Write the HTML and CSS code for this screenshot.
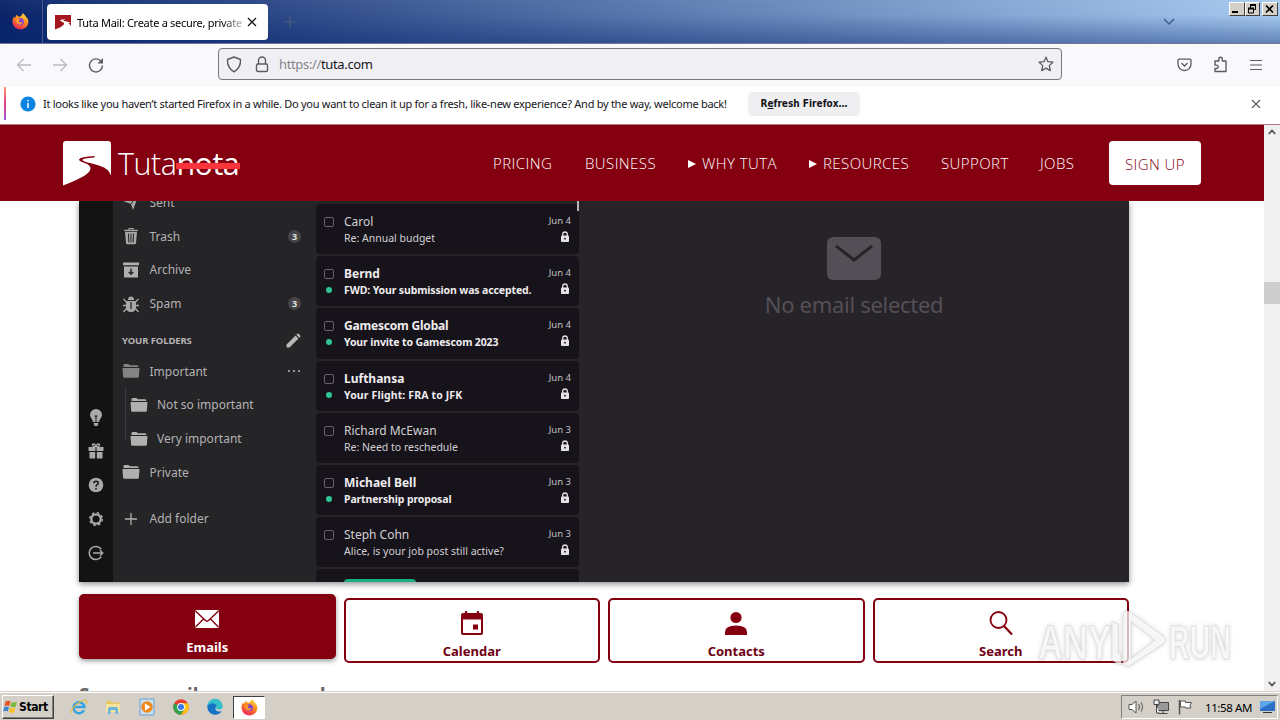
FILE: index.html
```html
<!DOCTYPE html>
<html lang="en">
<head>
<meta charset="utf-8">
<title>Tuta Mail</title>
<link rel="stylesheet" href="styles.css">
</head>
<body>
<svg width="0" height="0" class="defs">
  <defs>
    <linearGradient id="fox" x1="0.8" y1="0" x2="0.3" y2="1"><stop offset="0" stop-color="#ffe14a"/><stop offset="0.45" stop-color="#ff8a1c"/><stop offset="1" stop-color="#f0205a"/></linearGradient>
    <symbol id="firefox" viewBox="0 0 16 16"><path d="M10 0.3c1.800 1 2.400 2.200 3 3 2 1.600 2.700 4 2.300 6.300A7.500 7.500 0 0 1 .6 9.500C.2 7 .9 4.600 2 3.400l.6 1.200C3.600 3.400 4.300 2 4.700 1.400c.3 1.200 1 1.800 2.300 2.200C8.400 3 9.600 2 10 .3z" fill="url(#fox)"/><circle cx="7.800" cy="8.300" r="3.300" fill="#7a3fd8"/><path d="M3.500 7c1-2 3-1.500 4.500-.6C6.500 7 6 7.800 7 8.600c1 .6 2.300.2 2.800-.5.5 3-4.500 5-6.300-1.100z" fill="#ff9a25"/></symbol>
    <symbol id="lock" viewBox="0 0 10 12"><path d="M2.700 5V3.300a2.300 2.300 0 0 1 4.600 0V5" fill="none" stroke="#e4e2e5" stroke-width="1.300"/><rect x="1" y="4.600" width="8" height="6.400" rx="0.800" fill="#e4e2e5"/><circle cx="5" cy="7.700" r="0.900" fill="#17131a"/></symbol>
    <symbol id="folder" viewBox="0 0 18 16"><path d="M1.500 4V2.300Q1.500 1 2.800 1h3.700l1.300 1.300h7.400q1.200 0 1.300 1.700z" fill="currentColor"/><path d="M.5 5h17l-.6 8.500q-.1 1.300-1.400 1.300h-13q-1.300 0-1.400-1.300z" fill="currentColor"/></symbol>
  </defs>
</svg>

<div class="titlebar">
  <div class="pin"><svg width="17" height="17"><use href="#firefox"/></svg></div>
  <div class="tab">
    <svg width="16" height="16" viewBox="0 0 16 16"><path d="M0 1h16v11Q14 8.500 10 7.600 6.500 6.800 6.500 6.300 7 5.800 11 5.500 5.500 5.200 5.200 6.300 5.300 7 8 8 10.500 9.200 8 11.500 6 13.500 0 15.500z" fill="#a3161e"/><path d="M16 9Q13 7.500 9 7 6.700 6.500 11 5.500 6 5.600 5.200 6.300 5.300 7 8 8 10.500 9.200 8 11.500 6 13.500 0 15.500h1Q9 12 10.500 10 12 8.500 16 9z" fill="#fff"/></svg>
    <span class="tab-title">Tuta Mail: Create a secure, private</span>
    <svg width="10" height="10" viewBox="0 0 10 10"><path d="M1 1l8 8M9 1l-8 8" stroke="#15141a" stroke-width="1.300"/></svg>
  </div>
  <svg class="newtab" width="12" height="12" viewBox="0 0 12 12"><path d="M6 .5v11M.5 6h11" stroke="#4d5c79" stroke-width="1.200"/></svg>
  <svg class="alltabs" width="12" height="8" viewBox="0 0 12 8"><path d="M1 1l5 5 5-5" fill="none" stroke="#3e5e88" stroke-width="1.500"/></svg>
  <div class="winbtns">
    <span><svg width="12" height="12" viewBox="0 0 12 12"><path d="M2 9h6" stroke="#000" stroke-width="2"/></svg></span>
    <span><svg width="12" height="12" viewBox="0 0 12 12"><path d="M4.500 5V2h5v4.500H8M2.500 5.500h5v4.500h-5z" fill="none" stroke="#000"/><path d="M4 2h6M2 5.500h6" stroke="#000" stroke-width="1.800"/></svg></span>
    <span class="gap"><svg width="12" height="12" viewBox="0 0 12 12"><path d="M3 2.500l7 7M10 2.500l-7 7" stroke="#000" stroke-width="1.700"/></svg></span>
  </div>
</div>

<div class="toolbar">
  <svg width="16" height="14" viewBox="0 0 16 14"><path d="M15 7H1.500M7.500 1l-6 6 6 6" fill="none" stroke="#bcbcc0" stroke-width="1.300"/></svg>
  <svg class="fwd" width="16" height="14" viewBox="0 0 16 14"><path d="M1 7h13.500M8.500 1l6 6-6 6" fill="none" stroke="#bcbcc0" stroke-width="1.300"/></svg>
  <svg class="reload" width="16" height="16" viewBox="0 0 16 16"><path d="M13.200 4.500A6.500 6.500 0 1 0 14.500 8.500" fill="none" stroke="#5b5b66" stroke-width="1.400"/><path d="M15 1v5.500H9.500z" fill="#5b5b66"/></svg>
  <div class="urlbar">
    <svg width="16" height="17" viewBox="0 0 16 17"><path d="M8 1l6.500 2.500c.3 5.500-1.500 9.500-6.500 12.300C3 13 1.200 9 1.500 3.500z" fill="none" stroke="#5b5b66" stroke-width="1.400" stroke-linejoin="round"/></svg>
    <svg class="padlock" width="14" height="17" viewBox="0 0 14 17"><path d="M3.500 8V4.500a3.500 3.500 0 0 1 7 0V8" fill="none" stroke="#5b5b66" stroke-width="1.400"/><rect x="1.500" y="8" width="11" height="7.500" rx="1.500" fill="none" stroke="#5b5b66" stroke-width="1.400"/></svg>
    <span class="url"><i>https://</i>tuta.com</span>
    <svg class="star" width="16" height="16" viewBox="0 0 16 16"><path d="M8 1.200l2 4.500 4.900.5-3.600 3.400 1 5L8 12.100l-4.300 2.500 1-5L1.100 6.200 6 5.700z" fill="none" stroke="#5b5b66" stroke-width="1.300" stroke-linejoin="round"/></svg>
  </div>
  <div class="tools">
    <svg width="15" height="14" viewBox="0 0 15 14"><path d="M2 1.200h11q1 0 1 1V6a6.500 6.500 0 0 1-13 0V2.200q0-1 1-1z" fill="none" stroke="#5b5b66" stroke-width="1.300"/><path d="M4.500 5l3 3 3-3" fill="none" stroke="#5b5b66" stroke-width="1.300"/></svg>
    <svg width="16" height="17" viewBox="0 0 16 17"><path d="M2 5h3.800V3a1.700 1.700 0 0 1 3.500 0v2H13v10.500H2v-3h1.500a1.700 1.700 0 0 0 0-3.400H2z" fill="none" stroke="#5b5b66" stroke-width="1.400" stroke-linejoin="round"/></svg>
    <svg width="12" height="12" viewBox="0 0 12 12"><path d="M0 1.500h12M0 6h12M0 10.500h12" stroke="#5b5b66" stroke-width="1.200"/></svg>
  </div>
</div>

<div class="notice">
  <svg width="16" height="16" viewBox="0 0 16 16"><circle cx="8" cy="8" r="7.600" fill="#0a84e0"/><path d="M8 7v5M8 4v1.500" stroke="#fff" stroke-width="1.500"/></svg>
  <span class="notice-text">It looks like you haven’t started Firefox in a while. Do you want to clean it up for a fresh, like-new experience? And by the way, welcome back!</span>
  <button class="refresh">R<u>e</u>fresh Firefox…</button>
  <svg class="dismiss" width="10" height="10" viewBox="0 0 10 10"><path d="M1 1l8 8M9 1l-8 8" stroke="#5b5b66" stroke-width="1.100"/></svg>
</div>

<div class="viewport">
  <div class="page">
    <header class="site">
      <div class="brand">
        <svg width="48" height="45" viewBox="0 0 48 45"><path d="M3 0h42q3 0 3 3v31.500Q46 29 41 26.500 36 24 28 22.300 19.500 20.600 19.500 19 19.500 17.300 31 16.600L32 15Q17 15.500 16 18.500 15.800 20.200 21.500 22 27.500 24 27.500 27.500 27 31.500 20 35.500 12 40 0 44.500V3q0-3 3-3z" fill="#fff"/></svg>
        <span class="name"><span>Tuta</span><b>nota</b></span>
      </div>
      <nav>
        <a class="n1">PRICING</a><a class="n2">BUSINESS</a><a class="n3"><em></em>WHY TUTA</a><a class="n4"><em></em>RESOURCES</a><a class="n5">SUPPORT</a><a class="n6">JOBS</a>
        <a class="signup">SIGN UP</a>
      </nav>
    </header>
    <main>
      <section class="app">
        <div class="rail">
          <svg width="16" height="20" viewBox="0 0 16 20"><path d="M8 1a6 6 0 0 1 6 6c0 2.500-2.500 4-3 7H5C4.500 11 2 9.500 2 7a6 6 0 0 1 6-6zM5.500 15h5l-1 3h-3z" fill="#a9a9a9"/><path d="M6.500 8h3M8 8v6" stroke="#151515"/></svg>
          <svg width="16" height="16" viewBox="0 0 16 16"><path d="M.5 4h15v4h-15zM1.500 9h5.700v6.500H1.500zM8.800 9h5.700v6.500H8.800z" fill="#a9a9a9"/><path d="M8 4C4 4 3.500 1 5.500 1S8 4 8 4s.5-3 2.500-3S12 4 8 4" fill="none" stroke="#a9a9a9" stroke-width="1.300"/><path d="M8 4v4" stroke="#151515"/></svg>
          <svg width="16" height="16" viewBox="0 0 16 16"><circle cx="8" cy="8" r="7.300" fill="#a9a9a9"/><path d="M5.700 6.300q.2-2.100 2.400-2.100 2.300.1 2.200 2Q10 7.500 8.600 8.200 8 8.700 8 9.700M8 11v1.600" fill="none" stroke="#151515" stroke-width="1.500"/></svg>
          <svg width="16" height="16" viewBox="0 0 16 16"><circle cx="8" cy="8" r="4.700" fill="none" stroke="#a9a9a9" stroke-width="2.300"/><circle cx="8" cy="8" r="6.300" fill="none" stroke="#a9a9a9" stroke-width="1.500" stroke-dasharray="2.500 2.450"/></svg>
          <svg width="16" height="16" viewBox="0 0 16 16"><path d="M13.200 4.200a6.600 6.600 0 1 0 0 7.600M5 8h9.500M12 5.300L14.700 8 12 10.700" fill="none" stroke="#a9a9a9" stroke-width="1.500"/></svg>
        </div>
        <div class="folders">
          <div class="row"><svg width="18" height="18" viewBox="0 0 18 18"><path d="M1 8L17 1 11 17 9 11z" fill="#a8a8a8"/><path d="M9 11l5-7" stroke="#232325"/></svg>Sent</div>
          <div class="row"><svg width="18" height="18" viewBox="0 0 18 18"><path d="M3 5h12l-1 11q0 1.300-1.300 1.300H5.300Q4 17.300 4 16zM2.300 2.800h13.400v1.500H2.300zM6.500 2.500V1h5v1.500h-1.300V2H7.800v.5z" fill="#a8a8a8"/><path d="M6.500 6.500l.3 9M9 6.500v9M11.500 6.500l-.3 9" stroke="#29292b" stroke-width="1.100"/></svg>Trash<span class="count">3</span></div>
          <div class="row"><svg width="18" height="18" viewBox="0 0 18 18"><path d="M1 1.500h16v2.700H1zM2 5.500h14v11H2z" fill="#b0b0b0"/><path d="M9 7.500v5M6.700 11L9 13.300 11.300 11" fill="none" stroke="#29292b" stroke-width="1.500"/></svg>Archive</div>
          <div class="row"><svg width="18" height="18" viewBox="0 0 18 18"><path d="M6 5Q6 1.500 9 1.500T12 5zM4 6h10v6q0 5-5 5t-5-5z" fill="#a8a8a8"/><path d="M1.500 4L5 7.500M16.500 4L13 7.500M1 10.500h16M1.500 17L5 13M16.500 17L13 13" stroke="#a8a8a8" stroke-width="1.300"/><path d="M9 7v7" stroke="#29292b" stroke-width="1.300"/></svg>Spam<span class="count">3</span></div>
          <div class="row head">YOUR FOLDERS<svg class="pencil" width="15" height="15" viewBox="0 0 15 15"><path d="M.5 14.500V11.500l9-9 3 3-9 9zM10.300 1.700l1-1q.7-.5 1.300 0L14.300 2.400q.5.600 0 1.300l-1 1z" fill="#b8b8b8"/></svg></div>
          <div class="row dim"><svg width="18" height="16"><use href="#folder"/></svg>Important<span class="dots"><i></i><i></i><i></i></span></div>
          <div class="subtree">
            <div class="row"><svg width="18" height="16"><use href="#folder"/></svg>Not so important</div>
            <div class="row"><svg width="18" height="16"><use href="#folder"/></svg>Very important</div>
          </div>
          <div class="row"><svg width="18" height="16"><use href="#folder"/></svg>Private</div>
          <div class="row add"><svg width="18" height="16" viewBox="0 0 18 16"><path d="M9 2v12M3 8h12" stroke="#b0b0b0" stroke-width="1.300"/></svg>Add folder</div>
        </div>
        <div class="mails">
          <div class="mail"><div class="marks"><i class="box"></i></div><div class="txt"><p>Carol</p><small>Re: Annual budget</small></div><div class="side"><time>Jun 4</time><svg width="10" height="12"><use href="#lock"/></svg></div></div>
          <div class="mail new"><div class="marks"><i class="box"></i></div><div class="txt"><p>Bernd</p><small class="long">FWD: Your submission was accepted.</small></div><div class="side"><time>Jun 4</time><svg width="10" height="12"><use href="#lock"/></svg></div></div>
          <div class="mail new"><div class="marks"><i class="box"></i></div><div class="txt"><p class="tight">Gamescom Global</p><small class="long">Your invite to Gamescom 2023</small></div><div class="side"><time>Jun 4</time><svg width="10" height="12"><use href="#lock"/></svg></div></div>
          <div class="mail new"><div class="marks"><i class="box"></i></div><div class="txt"><p>Lufthansa</p><small class="wide">Your Flight: FRA to JFK</small></div><div class="side"><time>Jun 4</time><svg width="10" height="12"><use href="#lock"/></svg></div></div>
          <div class="mail"><div class="marks"><i class="box"></i></div><div class="txt"><p>Richard McEwan</p><small>Re: Need to reschedule</small></div><div class="side"><time>Jun 3</time><svg width="10" height="12"><use href="#lock"/></svg></div></div>
          <div class="mail new"><div class="marks"><i class="box"></i></div><div class="txt"><p>Michael Bell</p><small class="long">Partnership proposal</small></div><div class="side"><time>Jun 3</time><svg width="10" height="12"><use href="#lock"/></svg></div></div>
          <div class="mail"><div class="marks"><i class="box"></i></div><div class="txt"><p>Steph Cohn</p><small>Alice, is your job post still active?</small></div><div class="side"><time>Jun 3</time><svg width="10" height="12"><use href="#lock"/></svg></div></div>
          <div class="mail last"><i class="label"></i></div>
          <i class="thumb"></i>
        </div>
        <div class="reader">
          <svg width="54" height="43" viewBox="0 0 54 43"><rect width="54" height="43" rx="6" fill="#544f56"/><path d="M9 9l18 14L45 9" fill="none" stroke="#272429" stroke-width="3"/></svg>
          <p>No email selected</p>
        </div>
      </section>
      <div class="features">
        <div class="feature active"><svg width="26" height="24" viewBox="0 0 26 24"><rect x="1" y="3" width="24" height="18" rx="1.500" fill="#fff"/><path d="M1.500 4l9.700 9.300q1.800 1.700 3.600 0L24.500 4M1.500 20l8-8M24.500 20l-8-8" fill="none" stroke="#840010" stroke-width="1.400"/></svg><span>Emails</span></div>
        <div class="feature"><svg width="26" height="26" viewBox="0 0 26 26"><path d="M4 3h18q2 0 2 2v18q0 2-2 2H4q-2 0-2-2V5q0-2 2-2zM4 9.500V23h18V9.500z" fill="#840010" fill-rule="evenodd"/><path d="M7 1v4M19 1v4" stroke="#840010" stroke-width="2.200"/><path d="M14 14.500h5v5h-5z" fill="#840010"/></svg><span>Calendar</span></div>
        <div class="feature"><svg width="26" height="26" viewBox="0 0 26 26"><circle cx="13" cy="7.500" r="5.600" fill="#840010"/><path d="M2 25v-3q0-6.500 11-6.500T24 22v3z" fill="#840010"/></svg><span>Contacts</span></div>
        <div class="feature"><svg width="26" height="26" viewBox="0 0 26 26"><circle cx="10.500" cy="10" r="8" fill="none" stroke="#840010" stroke-width="1.800"/><path d="M16 16l8 8.500" stroke="#840010" stroke-width="2.200"/></svg><span>Search</span></div>
      </div>
      <h2>Secure emails as one word</h2>
    </main>
  </div>
  <div class="scrollbar">
    <svg width="8" height="6" viewBox="0 0 8 6"><path d="M.8 5L4 1.500 7.200 5" fill="none" stroke="#505050" stroke-width="1.800"/></svg>
    <i></i>
    <svg width="8" height="6" viewBox="0 0 8 6"><path d="M.8 1L4 4.500 7.200 1" fill="none" stroke="#505050" stroke-width="1.800"/></svg>
  </div>
</div>

<div class="taskbar">
  <div class="start"><svg width="16" height="16" viewBox="0 0 16 16"><path d="M2.500 2.500q3-1.500 5 0L6.300 7q-2-1-4.800 0z" fill="#e5562a"/><path d="M8.500 3q3 1.200 5.500-.3L12.800 7.500q-2.500 1.300-5.500 0z" fill="#7cb93c"/><path d="M1.200 8q2.500-1.200 4.800 0L4.800 12.500q-2-1.300-4.800 0z" fill="#3f86d0"/><path d="M7 8.500q3 1.200 5.500 0L11.200 13.300q-2.600 1.300-5.400-.3z" fill="#f6c32d"/></svg>Start</div>
  <svg class="q1" width="18" height="18" viewBox="0 0 18 18"><path d="M14 12.200A5.500 5.500 0 1 1 14.500 9H4" fill="none" stroke="#36a3e0" stroke-width="2.500"/><path d="M2 15.500C-1 13 8 3 15 2q3 .5 1 4" fill="none" stroke="#e9bd3b" stroke-width="1.200"/></svg>
  <svg width="18" height="18" viewBox="0 0 18 18"><path d="M2 3h6l1 1.500h7V14H2z" fill="#e8c765"/><path d="M2 6h14v8H2z" fill="#f6e39d"/><path d="M4 16v-5q0-2 2-2h6q2 0 2 2v5h-2.500v-4h-5v4z" fill="#69b5df"/></svg>
  <svg width="18" height="18" viewBox="0 0 18 18"><path d="M2 1h14v16H2z" fill="#c9dff2" stroke="#6ca0cc"/><circle cx="9" cy="9" r="5.800" fill="#f28b1c"/><path d="M7 5.500L12.500 9 7 12.500z" fill="#fff"/></svg>
  <svg width="18" height="18" viewBox="0 0 18 18"><circle cx="9" cy="9" r="7.800" fill="#e63e32"/><path d="M2.200 5.200A7.800 7.800 0 0 0 9 16.800L12.500 11 9 9z" fill="#2fa34b"/><path d="M9 16.800A7.800 7.800 0 0 0 15.900 5.200H9l3.500 5.800z" fill="#fbc418"/><circle cx="9" cy="9" r="3.900" fill="#fff"/><circle cx="9" cy="9" r="3" fill="#3b78e7"/></svg>
  <svg width="18" height="18" viewBox="0 0 18 18"><path d="M1.200 9A7.800 7.800 0 0 1 16.800 8q0 3.500-4 3.500-3 0-2.500-2C10 6 5 5 1.200 9z" fill="#35c1c9"/><path d="M1.200 8Q4 4.500 8 5.500q2.500.7 2.500 3-1.500 1-1 3 1.500 3 6.500 1.500Q13 17 9 16.800 1.500 16 1.200 8z" fill="#1672c4"/></svg>
  <div class="running"><svg width="17" height="17"><use href="#firefox"/></svg></div>
  <div class="tray">
    <svg width="18" height="16" viewBox="0 0 18 16"><path d="M1 5.500h3L8 2v12l-4-3.500H1z" fill="#fff" stroke="#555"/><path d="M10.500 5q2 3 0 6M13 3.500q3 4.500 0 9" fill="none" stroke="#666" stroke-width="1.100"/></svg>
    <svg width="17" height="16" viewBox="0 0 17 16"><path d="M4.500 3.500h11v8h-11z" fill="#999" stroke="#444"/><path d="M5.500 14.500h9M10 12v2M1 1h5v4.500H1zM3.500 6v8h3" fill="#eee" stroke="#444"/></svg>
    <svg width="16" height="16" viewBox="0 0 16 16"><path d="M2.500 1v14.500" stroke="#555" stroke-width="1.500"/><path d="M3.500 2h5v1.500h6L13 6.500l1 2.500H8.500V8h-5z" fill="#fff" stroke="#555"/></svg>
    <span>11:58 AM</span>
    <svg width="15" height="14" viewBox="0 0 15 14"><path d="M0 1h15v10H0z" fill="#2b6fc7"/><path d="M0 1h15L0 9z" fill="#5ea5ea"/><path d="M3 12.500h9" stroke="#333"/></svg>
  </div>
</div>

<svg class="watermark" width="204" height="66" viewBox="0 0 204 66">
  <g fill="#fff" fill-opacity="0.720" stroke="#d2d2d2" stroke-opacity="0.650" stroke-width="1">
    <text x="4" y="52" textLength="73" lengthAdjust="spacingAndGlyphs">ANY</text>
    <path d="M78 15v38l9 5V48l-3-2V17z M93 4q-4 0-4 5v44q0 8 6 6l34-22q5-4 0-8L96 5zM97 14l24 19-24 19z" fill-rule="evenodd"/>
    <text x="135" y="52" textLength="62" lengthAdjust="spacingAndGlyphs">RUN</text>
  </g>
</svg>
</body>
</html>
```
FILE: styles.css
```css
* { box-sizing: border-box; }
body { margin: 0; width: 1280px; height: 720px; overflow: hidden; display: flex; flex-direction: column; font-family: "Noto Sans", "Open Sans", sans-serif; font-size: 11px; background: #fff; }
svg { flex: none; display: block; }
p { margin: 0; }
i { font-style: normal; }
.defs { position: absolute; }

.titlebar { height: 44px; display: flex; align-items: center; border-bottom: 1px solid #6e7a94; background: linear-gradient(180deg, rgba(255,255,255,.04), rgba(10,36,106,0) 35%, rgba(5,35,110,.42)), linear-gradient(90deg, #0a246a, #a6caf0); }
.pin { width: 43px; height: 43px; padding-left: 12px; display: flex; align-items: center; border-right: 1px solid #46598f; }
.tab { width: 221px; height: 36px; margin-left: 4px; padding: 0 11px 0 8px; background: #fff; border-radius: 4px; display: flex; align-items: center; }
.tab-title { flex: 1; margin-left: 6px; padding-top: 1px; overflow: hidden; white-space: nowrap; letter-spacing: -.28px; -webkit-mask-image: linear-gradient(90deg, #000 145px, transparent 172px); }
.tab svg:last-child { margin-left: 3px; }
.newtab { margin-left: 16px; }
.alltabs { margin-left: auto; }
.winbtns { display: flex; align-self: flex-start; margin: 2px 2px 0 54px; }
.winbtns span { width: 15px; height: 14px; background: #d4d0c8; border: 1px solid; border-color: #fff #404040 #404040 #fff; }
.winbtns span:first-child { width: 16px; }
.winbtns .gap { margin-left: 2px; width: 16px; }

.toolbar { height: 43px; background: #f9f9fb; display: flex; align-items: center; padding: 0 18px 2px 16px; }
.fwd { margin-left: 20px; }
.reload { margin-left: 20px; }
.urlbar { width: 844px; height: 32px; margin-left: 114px; margin-top: -1px; padding: 0 7px; border: 1px solid #77777f; border-radius: 4px; background: #f0f0f4; display: flex; align-items: center; }
.padlock { margin-left: 13px; }
.url { margin-left: 10px; font-size: 13px; letter-spacing: -.35px; color: #15141a; }
.url i { color: #85858c; }
.star { margin-left: auto; }
.tools { margin-left: auto; display: flex; align-items: center; gap: 21px; }

.notice { height: 33px; margin: 0 4px 4px; background: #fff; border-left: 2px solid #d3569a; border-image: linear-gradient(#ffa06a, #e33f83, #9059e0) 1; display: flex; align-items: center; padding: 0 15px 0 14px; }
.notice-text { margin-left: 7px; width: 684px; white-space: nowrap; letter-spacing: -.27px; color: #15141a; }
.refresh { margin-left: 21px; width: 112px; height: 24px; border: 0; padding: 0; border-radius: 4px; background: #efeff1; font: bold 10px "DejaVu Sans Condensed", "DejaVu Sans", sans-serif; letter-spacing: 0; color: #15141a; }
.dismiss { margin-left: auto; }

.viewport { height: 567px; display: flex; border-top: 1px solid #b47a80; }
.page { width: 1264px; overflow: hidden; background: #fff; }
.site { height: 76px; background: #840010; display: flex; justify-content: space-between; align-items: center; padding: 0 63px; position: relative; z-index: 1; }
.brand { display: flex; align-items: center; gap: 7px; }
.name { font: 300 30.5px/44px "Open Sans", "Noto Sans", sans-serif; color: #fff; letter-spacing: -.5px; display: flex; }
.name b { font-weight: 400; position: relative; }
.name b::after { content: ""; position: absolute; left: 0; right: -1px; top: 22px; height: 6px; background: #f9343a; }
nav { display: flex; align-items: center; gap: 32px; font: 300 15px "Open Sans", "Noto Sans", sans-serif; letter-spacing: .42px; color: #fff; white-space: nowrap; }
nav em { display: inline-block; border-left: 8px solid #fff; border-top: 4px solid transparent; border-bottom: 4px solid transparent; margin-right: 6px; vertical-align: 1px; }
.n1 { width: 60px; } .n2 { width: 71px; } .n3 { width: 89px; } .n4 { width: 100px; } .n5 { width: 67px; } .n6 { width: 37px; }
.signup { width: 92px; height: 44px; padding-top: 2px; border-radius: 4px; background: #fff; color: #840010; display: flex; align-items: center; justify-content: center; }

main { width: 1050px; margin-left: 79px; }
.app { height: 381px; overflow: hidden; background: #272429; box-shadow: 0 2px 6px rgba(0,0,0,.45); display: flex; }
.rail { width: 34px; height: 381px; background: #131313; display: flex; flex-direction: column; align-items: center; justify-content: flex-end; gap: 18px; padding-bottom: 21px; }
.rail svg:first-child { margin-bottom: -3px; }
.folders { width: 203px; height: 381px; margin-top: -15.5px; background: #252426; padding: 0 14px 0 9px; font-family: "Noto Sans", sans-serif; font-size: 12px; color: #b4b2b5; box-shadow: 0 16px #252426; }
.row { height: 33.8px; display: flex; align-items: center; gap: 9.500px; white-space: nowrap; }
.row svg { color: #b0b0b0; }
.count { margin-left: auto; margin-right: 1px; width: 13px; height: 13px; border-radius: 50%; background: #454447; color: #e0e0e0; font: bold 9px/13px "Noto Sans", sans-serif; text-align: center; }
.head { font-size: 9.5px; font-weight: 700; margin: 2.6px 0 -2.9px; letter-spacing: -.1px; }
.pencil { margin-left: auto; margin-right: 1px; }
.row.dim svg { color: #838383; }
.dots { margin-left: auto; display: flex; gap: 3px; margin-right: 2px; }
.dots i { width: 2px; height: 2px; border-radius: 50%; background: #b4b2b5; }
.subtree { margin-left: 3px; padding-left: 5px; background: linear-gradient(#3c3b3e, #3c3b3e) 0 0 / 1px 52px no-repeat; height: 67.6px; }
.subtree .row { gap: 9px; }
.add { margin-top: 12.3px; }
.mails { width: 263px; padding-top: 3px; display: flex; flex-direction: column; gap: 1.900px; position: relative; }
.mail { height: 50.3px; flex: none; border-radius: 4px; background: #17131a; display: flex; padding-left: 8px; padding-right: 8px; color: #d2d0d4; }
.marks { width: 20px; padding-top: 13px; }
.box { display: block; width: 10px; height: 10px; border: 1.500px solid #66626a; border-radius: 2px; }
.new .marks::after { content: ""; display: block; width: 6px; height: 6px; margin: 8px 0 0 2px; border-radius: 50%; background: #2fc596; }
.txt { flex: 1; padding-top: 9px; white-space: nowrap; }
.txt p { font-size: 12px; line-height: 17px; }
.txt small { display: block; font-size: 10.500px; line-height: 17px; }
.txt .long { letter-spacing: -.13px; }
.txt .wide { letter-spacing: .13px; }
.txt .tight { letter-spacing: -.2px; }
.new { color: #eeecef; font-weight: 700; }
.side { width: 30px; padding-top: 11px; display: flex; flex-direction: column; align-items: flex-end; gap: 4px; font-weight: 400; }
.side time { font-size: 9.5px; line-height: 12px; color: #c4c2c6; white-space: nowrap; }
.side svg { margin-right: 1px; }
.label { width: 72px; height: 10px; margin: 10px 0 0 20px; border-radius: 4px; background: #18ad83; }
.thumb { position: absolute; right: 0; top: 0; width: 2px; height: 10px; background: #b7b5b9; }
.reader { flex: 1; display: flex; flex-direction: column; align-items: center; padding-top: 36px; }
.reader p { margin-top: 8px; font: 22px/32px "Noto Sans", sans-serif; color: #544f56; letter-spacing: -.3px; }

.features { margin-top: 16px; display: grid; grid-template-columns: repeat(4, 1fr); gap: 8px; height: 65px; }
.feature { height: 65px; border: 2px solid #840010; border-radius: 5px; background: #fff; color: #700014; display: flex; flex-direction: column; align-items: center; padding-top: 10px; font: bold 13px/18px "Noto Sans", sans-serif; }
.feature svg { height: 26px; }
.feature span { margin-top: 6px; }
.active { background: #840010; color: #fff; margin-top: -4px; box-shadow: 0 2px 5px rgba(0,0,0,.4); }
h2 { margin: 19px 0 0; font: bold 19px/27px "Noto Sans", sans-serif; letter-spacing: -.15px; color: #666; white-space: nowrap; }

.scrollbar { width: 16px; background: #f0f0f0; display: flex; flex-direction: column; align-items: center; padding: 4px 0; justify-content: space-between; }
.scrollbar i { width: 16px; height: 22px; background: #cdcdcd; margin-top: -231px; }

.taskbar { height: 29px; background: #d4d0c8; border-top: 1px solid #d4d0c8; box-shadow: inset 0 1px #fff; display: flex; align-items: center; padding: 2px 2px 0; }
.start { width: 52px; height: 24px; border: 1px solid; border-color: #fff #404040 #404040 #fff; box-shadow: inset -1px -1px #808080; display: flex; align-items: center; font: bold 12px "DejaVu Sans Condensed", sans-serif; letter-spacing: -.4px; white-space: nowrap; }
.taskbar > svg { margin-left: 16px; }
.taskbar > .q1 { margin-left: 16px; }
.running { width: 32px; height: 23px; margin-left: 9px; border: 1px solid; border-color: #404040 #fff #fff #404040; background: #fff; display: flex; align-items: center; justify-content: center; }
.tray { margin-left: auto; width: 157px; height: 24px; border: 1px solid; border-color: #808080 #fff #fff #808080; display: flex; align-items: center; gap: 7px; padding: 0 2px 0 6px; }
.tray span { margin-left: 5px; flex: 1; font-size: 11.500px; letter-spacing: -.4px; white-space: nowrap; }
.watermark { position: absolute; left: 1034px; top: 607px; font: bold 49px "Liberation Sans", sans-serif; filter: drop-shadow(0 0 2px rgba(0,0,0,.2)); }
```
